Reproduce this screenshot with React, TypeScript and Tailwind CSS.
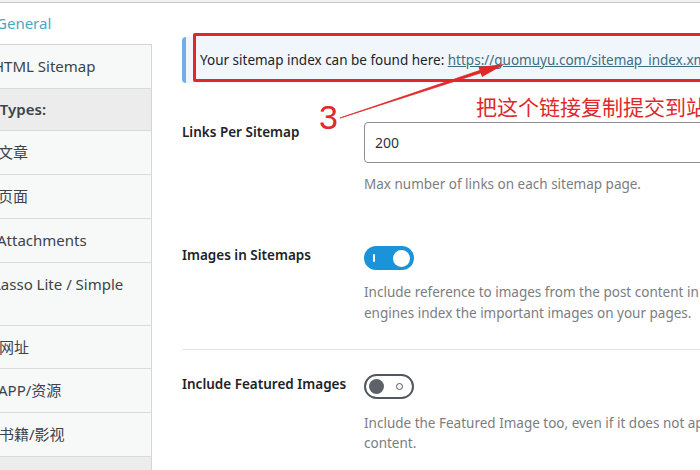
import React from 'react';

const navItems: { label: string; cls: string; header?: boolean }[] = [
  { label: 'HTML Sitemap', cls: '-ml-[7px] h-[43px]' },
  { label: 'Post Types:', cls: '-ml-[36px] h-[41px] font-semibold', header: true },
  { label: '文章', cls: '-ml-[2px] h-[43px]' },
  { label: '页面', cls: '-ml-[2px] h-[43px]' },
  { label: 'Attachments', cls: '-ml-[3px] h-[43px]' },
  { label: 'Lasso Lite / Simple', cls: '-ml-[7px] h-[62px] pt-[10px] !items-start' },
  { label: '网址', cls: '-ml-[1px] h-[42px]' },
  { label: 'APP/资源', cls: '-ml-[2px] h-[43px]' },
  { label: '书籍/影视', cls: '-ml-[1px] h-[43px]' },
];

const Toggle: React.FC<{ on: boolean }> = ({ on }) =>
  on ? (
    <div className="w-[50px] h-[24px] rounded-full bg-[#1b93d9] flex items-center justify-between pl-[9px] pr-[4px]">
      <span className="w-[2px] h-[8px] bg-white rounded-sm" />
      <span className="w-[17px] h-[17px] rounded-full bg-white" />
    </div>
  ) : (
    <div className="w-[50px] h-[25px] rounded-full border-2 border-[#50575e] flex items-center justify-between pl-[3px] pr-[9px]">
      <span className="w-[15px] h-[15px] rounded-full bg-[#5c6268]" />
      <span className="w-[7px] h-[7px] rounded-full border border-[#50575e]" />
    </div>
  );

export default function App() {
  return (
    <div className="relative w-[700px] h-[470px] overflow-hidden bg-white text-[#3c434a] font-['Noto_Sans','Noto_Sans_CJK_SC',sans-serif]">
      <div className="h-[3px] bg-[#f2f2f2] border-b border-[#c6c6c6]" />
      <div className="flex">
        {/* sidebar */}
        <aside className="w-[152px] shrink-0">
          <div className="h-[41px] flex items-center -ml-[4px] text-[15px] text-[#45a9c0]">General</div>
          <div className="border-t border-r border-[#d4d5d7] bg-[#f7f8f8]">
            {navItems.map((it) => (
              <div
                key={it.label}
                className={`flex items-center whitespace-nowrap border-b border-[#d9dadc] text-[15px] ${it.header ? 'bg-[#ececed]' : ''}`}
              >
                <span className={`flex items-center ${it.cls}`}>{it.label}</span>
              </div>
            ))}
            <div className="h-[20px] bg-[#ececed]" />
          </div>
        </aside>

        {/* content */}
        <main className="ml-[30px] flex-1 min-w-0 pt-[34px]">
          <div className="h-[46px] flex items-center rounded-l-[4px] border-l-4 border-[#72aee6] bg-[#f0f6fc] pl-[14px] whitespace-nowrap text-[13.5px] text-[#1d2327]">
            Your sitemap index can be found here:&nbsp;
            <span className="underline text-[#3c6f7e]">https://guomuyu.com/sitemap_index.xml</span>
          </div>

          <div className="grid grid-cols-[182px_1fr] mt-[39px]">
            <div className="text-[13.5px] font-semibold text-[#1d2327] leading-[20px]">Links Per Sitemap</div>
            <div>
              <div className="h-[41px] w-[340px] flex items-center border border-[#8c8f94] rounded-[4px] pl-[10px] text-[14px] text-[#2c3338]">
                200
              </div>
              <p className="mt-[11px] text-[13.5px] leading-[20px] text-[#7a7d82] whitespace-nowrap">
                Max number of links on each sitemap page.
              </p>
            </div>

            <div className="mt-[51px] text-[13.5px] font-semibold text-[#1d2327] leading-[20px]">Images in Sitemaps</div>
            <div className="mt-[52px]">
              <Toggle on />
              <p className="mt-[12px] text-[13.5px] leading-[21px] text-[#7a7d82] whitespace-nowrap">
                Include reference to images from the post content in sitemaps. This helps search
                <br />
                engines index the important images on your pages.
              </p>
            </div>
          </div>

          <div className="mt-[25px] h-px bg-[#e3e4e6] w-[600px]" />

          <div className="grid grid-cols-[182px_1fr] mt-[24px]">
            <div className="text-[13.5px] font-semibold text-[#1d2327] leading-[20px]">Include Featured Images</div>
            <div>
              <Toggle on={false} />
              <p className="mt-[14px] text-[13.5px] leading-[20px] text-[#7a7d82] whitespace-nowrap">
                Include the Featured Image too, even if it does not appear directly in the post
                <br />
                content.
              </p>
            </div>
          </div>
        </main>
      </div>

      {/* red annotations */}
      <div className="absolute left-[193px] top-[33px] w-[520px] h-[49px] border-[3px] border-[#e0282a] rounded-[2px]" />
      <div className="absolute left-[319px] top-[97px] text-[34px] leading-[40px] text-[#e0282a] font-['Liberation_Sans',sans-serif]">3</div>
      <div className="absolute left-[476px] top-[92px] whitespace-nowrap text-[21px] leading-[28px] text-[#e0282a] font-['Noto_Sans_CJK_SC',sans-serif]">
        把这个链接复制提交到站长平台
      </div>
      <svg className="absolute left-0 top-0" width="700" height="470" viewBox="0 0 700 470">
        <path d="M340 118 L482 72.5 L481 70 Z" fill="#e0282a" stroke="#e0282a" strokeWidth="0.8" />
        <path d="M505 64 L478.5 67 L482 77 Z" fill="#e0282a" />
      </svg>
    </div>
  );
}
